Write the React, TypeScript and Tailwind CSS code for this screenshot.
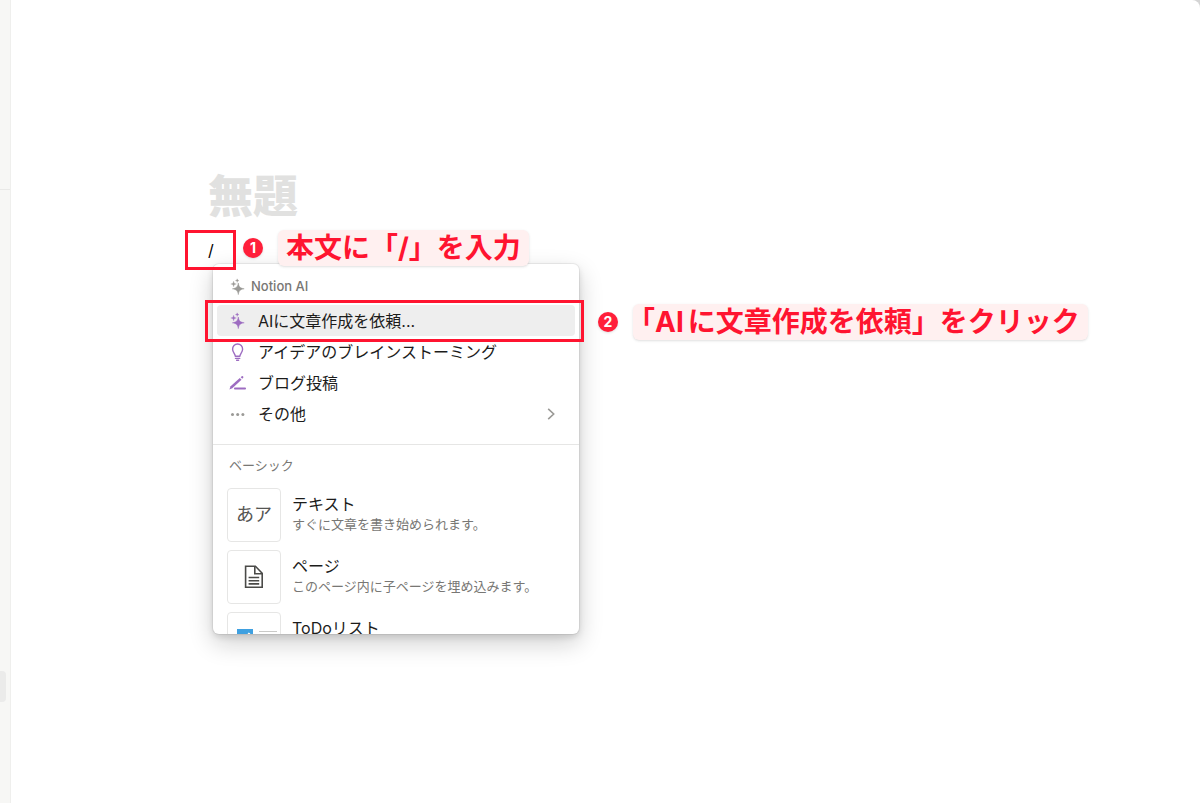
import type { ReactNode } from "react"

const SparkleIcon = ({ className }: { className?: string }) => (
  <svg viewBox="0 0 18 18" className={`size-[18px] shrink-0 ${className ?? ""}`} fill="currentColor" aria-hidden="true">
    <path d="M9.300 5c.7 4 1.700 5 5.900 5.800-4.200.8-5.200 1.800-5.900 5.800-.7-4-1.700-5-5.900-5.800C7.600 10 8.600 9 9.300 5z" stroke="currentColor" strokeWidth=".5" strokeLinejoin="round" />
    <path d="M4.600 3.200c.4 2 .8 2.400 2.800 2.800-2 .4-2.400.8-2.800 2.800C4.200 6.800 3.800 6.400 1.800 6c2-.4 2.400-.8 2.800-2.800z" stroke="currentColor" strokeWidth=".3" />
    <path d="M8.200.8c.3 1.300.5 1.500 1.800 1.800-1.300.3-1.500.5-1.800 1.800-.3-1.300-.5-1.500-1.800-1.800 1.300-.3 1.500-.5 1.800-1.800z" stroke="currentColor" strokeWidth=".3" />
  </svg>
)

const BulbIcon = () => (
  <svg viewBox="0 0 18 18" className="size-[18px] shrink-0" fill="none" stroke="currentColor" strokeWidth="1.4" strokeLinecap="round" aria-hidden="true">
    <path d="M6.300 13.300c0-2.300-2.700-3.700-2.700-7.100A5 5 0 0 1 8.600 1a5 5 0 0 1 5 5.200c0 3.400-2.700 4.800-2.700 7.100z" strokeLinejoin="round" />
    <path d="M6.500 15.400h4.200M7.600 17.300h2" />
  </svg>
)

const PencilIcon = () => (
  <svg viewBox="0 0 18 18" className="size-[18px] shrink-0" fill="currentColor" aria-hidden="true">
    <path d="M.4 15.500l1.200-3.200L10.800 4l1.700 1.800-9.200 8.500z" />
    <path d="M11.700 3.200l1.300-1.200 1 .2.500 1-1.200 1.500z" />
    <rect x="5" y="13.600" width="12" height="1.900" rx=".9" />
  </svg>
)

const DotsIcon = () => (
  <svg viewBox="0 0 18 18" className="size-[18px] shrink-0 text-[#9b9a97]" fill="currentColor" aria-hidden="true">
    <circle cx="3.500" cy="9.500" r="1.500" />
    <circle cx="8.700" cy="9.500" r="1.500" />
    <circle cx="13.900" cy="9.500" r="1.500" />
  </svg>
)

const PageIcon = () => (
  <svg viewBox="0 0 20 24" className="h-6 w-5" fill="none" stroke="#4a4a48" strokeWidth="1.600" aria-hidden="true">
    <path d="M1.600 1.200h9.800l6.800 7v14H1.600z" />
    <path d="M10.800 1.200v7.600h7.400M4.600 12.500h10.600M4.600 15.700h10.600M4.600 18.900h10.600" />
  </svg>
)

const TodoIcon = () => (
  <svg viewBox="0 0 54 54" className="size-[54px] shrink-0" aria-hidden="true">
    <rect x="10" y="17" width="16" height="16" fill="#3fa0e0" />
    <path d="M13.500 25l3.500 3.500 5.500-7.500" fill="none" stroke="#fff" strokeWidth="2" />
    <path d="M32 19.500h18M32 28.500h18" stroke="#c9c9c7" strokeWidth="1" />
  </svg>
)

const aiActions = [
  { label: "AIに文章作成を依頼...", icon: <SparkleIcon />, active: true },
  { label: "アイデアのブレインストーミング", icon: <BulbIcon /> },
  { label: "ブログ投稿", icon: <PencilIcon /> },
  { label: "その他", icon: <DotsIcon />, more: true },
]

const blocks = [
  {
    title: "テキスト",
    description: "すぐに文章を書き始められます。",
    preview: <span className="text-lg text-[#555553]">あア</span>,
  },
  { title: "ページ", description: "このページ内に子ページを埋め込みます。", preview: <PageIcon /> },
  { title: "ToDoリスト", preview: <TodoIcon /> },
]

function Callout({ step, className, children }: { step: number; className: string; children: ReactNode }) {
  return (
    <div className={`absolute z-20 flex items-center gap-[15px] whitespace-nowrap ${className}`}>
      <span className="flex size-5 items-center justify-center rounded-full bg-[#ff1f3a] text-sm font-bold text-white shadow-sm">
        {step}
      </span>
      <p className="rounded-md bg-[#fff0f0] px-2 text-[28px] leading-9 font-bold text-[#ff1430] shadow-sm [text-spacing-trim:trim-start]">
        {children}
      </p>
    </div>
  )
}

function SlashMenu() {
  return (
    <div
      role="menu"
      className="absolute top-[34px] left-[5px] h-[370px] w-[366px] overflow-hidden rounded-md bg-white pt-1 shadow-[0_0_0_1px_rgba(15,15,15,0.06),0_3px_6px_rgba(15,15,15,0.12),0_9px_24px_rgba(15,15,15,0.2)]"
    >
      <div className="flex h-[37px] items-center gap-1 pl-4 text-[13px] font-medium text-[#787774]">
        <SparkleIcon className="text-[#9b9a97]" />
        Notion AI
      </div>
      <div className="px-1 pb-[15px]">
        {aiActions.map((action) => (
          <button
            key={action.label}
            type="button"
            role="menuitem"
            className={`flex h-[31px] w-full items-center gap-[11px] rounded-sm pr-5 pl-3 text-left text-base text-[#9d6cc1] ${
              action.active ? "bg-[#eeeeee]" : ""
            }`}
          >
            {action.icon}
            <span className="flex-1 text-[#1c1c1b]">{action.label}</span>
            {action.more && (
              <svg viewBox="0 0 8 12" className="h-3 w-2" fill="none" stroke="#9b9a97" strokeWidth="1.600" aria-hidden="true">
                <path d="M1.200 .8L6.700 6l-5.500 5.200" />
              </svg>
            )}
          </button>
        ))}
      </div>
      <div className="border-t border-[#e6e6e5]">
        <div className="flex h-[42px] items-center pl-4 text-[13px] text-[#787774]">ベーシック</div>
        <div className="flex flex-col gap-2 pt-px pl-[14px]">
          {blocks.map((block) => (
            <button key={block.title} type="button" role="menuitem" className="flex gap-[11px] text-left">
              <span className="flex size-[54px] shrink-0 items-center justify-center overflow-hidden rounded-sm border border-[#e6e6e5]">
                {block.preview}
              </span>
              <span className="flex flex-col pt-[5px] whitespace-nowrap">
                <span className="text-base leading-[22px] text-[#1c1c1b]">{block.title}</span>
                {block.description && (
                  <span className="text-[13px] leading-[18px] text-[#787774]">{block.description}</span>
                )}
              </span>
            </button>
          ))}
        </div>
      </div>
    </div>
  )
}

export default function App() {
  return (
    <div className="flex min-h-screen bg-[#d4d4d4] font-[Inter,'Noto_Sans_CJK_JP',sans-serif]">
      <aside className="flex w-[11px] shrink-0 flex-col border-r border-[#efefed] bg-[#f7f7f5]">
        <div className="h-[190px] border-b border-[#e9e9e7]" />
        <div className="mt-[481px] mr-1 h-[31px] rounded-r-sm bg-[#ebebea]" />
      </aside>
      <main className="min-w-0 flex-1 rounded-tr-lg bg-white pt-[167px] pl-[197px]">
        <h1 className="text-[45px] leading-[60px] font-black text-[#e1e1e0]">無題</h1>
        <div className="relative mt-[3px]">
          <p className="text-base leading-10 text-black">/</p>
          <div className="absolute top-0 -left-[23px] z-10 h-10 w-[51px] border-3 border-[#ff1430]" />
          <SlashMenu />
          <div className="absolute top-[70px] -left-[3px] z-10 h-[42px] w-[379px] border-3 border-[#ff1430]" />
          <Callout step={1} className="top-0 left-[35px]">
            本文に「/」を入力
          </Callout>
          <Callout step={2} className="top-[74px] left-[390px]">
            「<span className="mr-1">AI</span>に文章作成を依頼」をクリック
          </Callout>
        </div>
      </main>
    </div>
  )
}
